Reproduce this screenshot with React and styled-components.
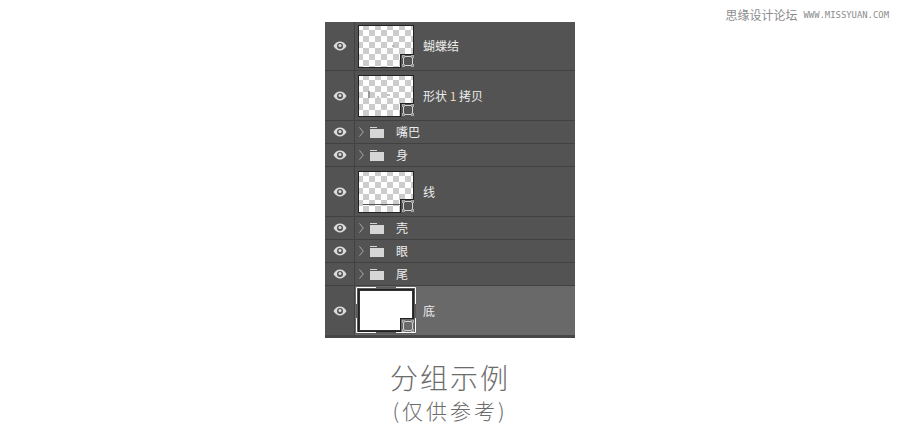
import React from 'react'
import styled, { createGlobalStyle } from 'styled-components'

const GlobalStyle = createGlobalStyle`
  html, body {
    margin: 0;
    padding: 0;
    background: #fff;
    font-family: "Noto Sans CJK SC", "Noto Sans", sans-serif;
  }
`

const Page = styled.div`
  width: 900px;
  height: 439px;
  overflow: hidden;
  display: flex;
  flex-flow: column nowrap;
  align-items: center;
`

const Watermark = styled.div`
  align-self: flex-end;
  box-sizing: border-box;
  height: 22px;
  padding-top: 8px;
  padding-right: 11px;
  display: flex;
  align-items: center;
  gap: 6px;
  color: #8c8c8c;
`

const WatermarkName = styled.span`
  font-size: 12px;
  line-height: 14px;
`

const WatermarkUrl = styled.span`
  font-family: "DejaVu Sans Mono", monospace;
  font-size: 8.9px;
  line-height: 14px;
`

const Panel = styled.div`
  width: 250px;
  background-color: #535353;
  border-bottom: 3px solid #474747;
`

const Row = styled.div`
  display: flex;
  flex-flow: row nowrap;
  align-items: stretch;
  box-sizing: border-box;
  height: ${props => props.$height}px;
  border-top: 1px solid #414141;
  background-color: ${props => (props.$selected ? '#696969' : '#535353')};

  &:first-child {
    border-top: none;
  }
`

const EyeCell = styled.div`
  flex: none;
  width: 29px;
  display: flex;
  align-items: center;
  justify-content: center;
  background-color: #535353;
  border-right: 1px solid #414141;
`

const Body = styled.div`
  flex: 1;
  display: flex;
  align-items: center;
  color: #ececec;
  font-size: 12px;
`

const Thumb = styled.div`
  position: relative;
  flex: none;
  box-sizing: border-box;
  width: 56px;
  height: ${props => props.$height}px;
  margin-left: 3px;
  margin-right: 9px;
  border: 1px solid #222;
  background-color: #fff;
  background-image: ${props => (props.$blank ? 'none' : 'conic-gradient(#ccc 25%, #fff 0 50%, #ccc 0 75%, #fff 0)')};
  background-size: 12px 12px;
  background-position: -2px -2px;
  box-shadow: ${props => (props.$blank ? 'inset 0 0 0 1px #333, 0 0 0 2px #5a5a5a' : 'none')};
`

const Badge = styled.div`
  position: absolute;
  right: -1px;
  bottom: -1px;
  width: 13px;
  height: 13px;
  display: flex;
  align-items: center;
  justify-content: center;
  background-color: ${props => (props.$selected ? '#696969' : '#535353')};
  border-top: 1px solid #222;
  border-left: 1px solid #222;
`

const Speck = styled.div`
  position: absolute;
  width: ${props => props.$w}px;
  height: ${props => props.$h}px;
  left: ${props => props.$x}px;
  top: ${props => props.$y}px;
  background-color: ${props => props.$color};
`

const Brackets = styled.svg`
  position: absolute;
  left: -3px;
  top: -3px;
`

const LayerName = styled.span`
  white-space: pre;
  line-height: 16px;
`

const Version = styled.span`
  color: #f2d3b4;
`

const Chevron = styled.svg`
  flex: none;
  margin-left: 4px;
  margin-right: 6px;
`

const Folder = styled.svg`
  flex: none;
  margin-right: 12px;
`

const Caption = styled.div`
  margin-top: 20px;
  color: #6c6c6c;
  font-size: 28px;
  line-height: 38px;
  font-weight: 300;
  letter-spacing: 2px;
  text-align: center;
`

const SubCaption = styled.div`
  color: #6c6c6c;
  font-size: 21px;
  line-height: 29px;
  font-weight: 300;
  letter-spacing: 3px;
  text-align: center;
`

const Eye = () => (
  <svg width="14" height="10" viewBox="0 0 14 10">
    <path d="M0.5 5C2.2 2 4.4 0.6 7 0.6S11.8 2 13.5 5C11.8 8 9.6 9.4 7 9.4S2.2 8 0.5 5Z" fill="#dcdcdc" />
    <circle cx="7" cy="5" r="3" fill="#535353" />
    <circle cx="7" cy="4.6" r="1.5" fill="#dcdcdc" />
  </svg>
)

const handles = [[0.5, 0.5], [9.5, 0.5], [0.5, 9.5], [9.5, 9.5]]

const TransformIcon = () => (
  <svg width="12" height="12" viewBox="0 0 12 12" shapeRendering="crispEdges">
    <rect x="1.5" y="1.5" width="9" height="9" fill="none" stroke="#d4d4d4" />
    {handles.map(([x, y]) => (
      <rect key={`${x}-${y}`} x={x} y={y} width="2" height="2" fill="#7a7a7a" stroke="#a8a8a8" />
    ))}
  </svg>
)

const GroupRow = ({ name }) => (
  <Row $height={23}>
    <EyeCell><Eye /></EyeCell>
    <Body>
      <Chevron width="5" height="10" viewBox="0 0 5 10">
        <path d="M0.5 0.5L4.3 5L0.5 9.5" fill="none" stroke="#b5b5b5" strokeWidth="0.9" />
      </Chevron>
      <Folder width="14" height="11" viewBox="0 0 14 11">
        <path d="M0 0H7V1H0Z" fill="#d6d6d6" />
        <path d="M0 2H14V11H0Z" fill="#d6d6d6" />
      </Folder>
      <LayerName>{name}</LayerName>
    </Body>
  </Row>
)

const LayerRow = ({ height, thumbHeight, selected, blank, specks = [], children }) => (
  <Row $height={height} $selected={selected}>
    <EyeCell><Eye /></EyeCell>
    <Body>
      <Thumb $height={thumbHeight} $blank={blank}>
        {specks.map((s, i) => (
          <Speck key={i} $x={s.x} $y={s.y} $w={s.w} $h={s.h} $color={s.color} />
        ))}
        {selected && (
          <Brackets width="60" height="46" viewBox="0 0 60 46">
            <path
              d="M20 .5H.5V17M40 .5H59.5V17M.5 31V45.5H20M59.5 31V45.5H40"
              fill="none"
              stroke="#fff"
            />
          </Brackets>
        )}
        <Badge $selected={selected}><TransformIcon /></Badge>
      </Thumb>
      <LayerName>{children}</LayerName>
    </Body>
  </Row>
)

const App = () => (
  <Page>
    <GlobalStyle />
    <Watermark>
      <WatermarkName>思缘设计论坛</WatermarkName>
      <WatermarkUrl>WWW.MISSYUAN.COM</WatermarkUrl>
    </Watermark>

    <Panel>
      <LayerRow
        height={48}
        thumbHeight={43}
        specks={[{ x: 33, y: 19, w: 3, h: 2, color: '#bbb' }]}
      >
        蝴蝶结
      </LayerRow>
      <LayerRow
        height={50}
        thumbHeight={42}
        specks={[
          { x: 9, y: 15, w: 2, h: 7, color: '#999' },
          { x: 18, y: 20, w: 2, h: 2, color: '#c4c4c4' },
          { x: 28, y: 18, w: 3, h: 2, color: '#c4c4c4' },
          { x: 22, y: 30, w: 6, h: 1, color: '#c4c4c4' }
        ]}
      >
        形状 <Version>1</Version> 拷贝
      </LayerRow>
      <GroupRow name="嘴巴" />
      <GroupRow name="身" />
      <LayerRow
        height={50}
        thumbHeight={42}
        specks={[{ x: 4, y: 32, w: 37, h: 1, color: '#555' }]}
      >
        线
      </LayerRow>
      <GroupRow name="壳" />
      <GroupRow name="眼" />
      <GroupRow name="尾" />
      <LayerRow height={50} thumbHeight={43} selected blank>
        底
      </LayerRow>
    </Panel>

    <Caption>分组示例</Caption>
    <SubCaption>(仅供参考)</SubCaption>
  </Page>
)

export default App
